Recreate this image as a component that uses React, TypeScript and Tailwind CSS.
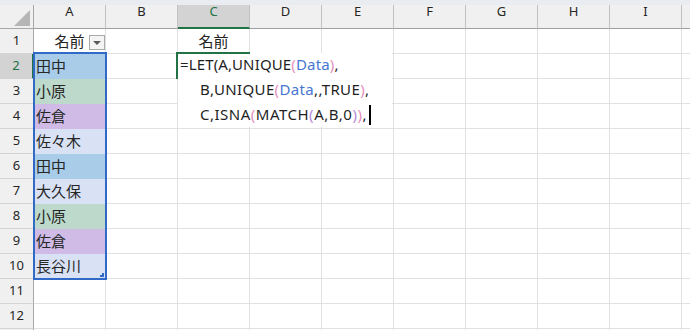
const cols = ["A", "B", "C", "D", "E", "F", "G", "H", "I", "J"];

const names: { text: string; bg: string }[] = [
  { text: "田中", bg: "bg-[#a9cce9] border-b-[#a9cce9]" },
  { text: "小原", bg: "bg-[#bcd9cb] border-b-[#bcd9cb]" },
  { text: "佐倉", bg: "bg-[#cfbbe6] border-b-[#cfbbe6]" },
  { text: "佐々木", bg: "bg-[#d9e2f4] border-b-[#d9e2f4]" },
  { text: "田中", bg: "bg-[#a9cce9] border-b-[#a9cce9]" },
  { text: "大久保", bg: "bg-[#d9e2f4] border-b-[#d9e2f4]" },
  { text: "小原", bg: "bg-[#bcd9cb] border-b-[#bcd9cb]" },
  { text: "佐倉", bg: "bg-[#cfbbe6] border-b-[#cfbbe6]" },
  { text: "長谷川", bg: "bg-[#d9e2f4] border-b-[#d9e2f4]" },
];

const P2 = ({ c }: { c: string }) => <span className="text-[#e38fbd]">{c}</span>;
const P3 = ({ c }: { c: string }) => <span className="text-[#b58bd8]">{c}</span>;
const Ref = ({ c }: { c: string }) => <span className="text-[#4676d2]">{c}</span>;

function ColumnHeader() {
  return (
    <div className="flex h-[24px] bg-[#f0f0f0]">
      <div className="w-[34px] shrink-0 border-r border-b border-[#a8a8a8] flex items-end justify-end pr-[3px] pb-[2px]">
        <svg width="16" height="16" viewBox="0 0 16 16">
          <polygon points="16,0 16,16 0,16" fill="#b6b6b6" />
        </svg>
      </div>
      {cols.map((c) => (
        <div
          key={c}
          className={
            c === "C"
              ? "w-[72px] shrink-0 flex justify-center items-start text-[13px] leading-[13px] border-r border-[#c2c2c2] border-b-2 border-b-[#217346] bg-[#d3d3d3] text-[#217346]"
              : "w-[72px] shrink-0 flex justify-center items-start text-[13px] leading-[13px] border-r border-[#c2c2c2] border-b border-b-[#9f9f9f] text-[#262626]"
          }
        >
          {c === "J" ? "" : c}
        </div>
      ))}
    </div>
  );
}

function Row({ n }: { n: number }) {
  const name = n >= 2 && n <= 10 ? names[n - 2] : null;
  return (
    <div className="flex h-[25px]">
      <div
        className={
          n === 2
            ? "w-[34px] shrink-0 flex items-center justify-center text-[13px] bg-[#d3d3d3] text-[#217346] border-b border-b-[#d4d4d4] border-r-2 border-r-[#217346]"
            : "w-[34px] shrink-0 flex items-center justify-center text-[13px] bg-[#f0f0f0] text-[#262626] border-b border-b-[#d4d4d4] border-r border-r-[#a8a8a8]"
        }
      >
        {n <= 12 ? n : ""}
      </div>
      {cols.map((c) => {
        if (c === "A") {
          if (n === 1) {
            return (
              <div key={c} className="relative w-[72px] shrink-0 border-r border-b border-[#e1e1e1] flex items-center justify-center text-[15px] text-[#222]">
                名前
                <div className="absolute right-0 top-[6px] w-[16px] h-[15px] border border-[#a9a9a9] bg-[#f4f4f4] flex items-center justify-center">
                  <div className="w-0 h-0 border-l-[4px] border-r-[4px] border-t-[4px] border-l-transparent border-r-transparent border-t-[#5a5a5a]" />
                </div>
              </div>
            );
          }
          if (name) {
            return (
              <div key={c} className={`w-[72px] shrink-0 border-r border-r-[#e1e1e1] border-b flex items-center pl-[2px] text-[15px] text-[#262626] ${name.bg}`}>
                {name.text}
              </div>
            );
          }
        }
        if (c === "C" && n === 1) {
          return (
            <div key={c} className="w-[72px] shrink-0 border-r border-b border-[#e1e1e1] flex items-center justify-center text-[15px] text-[#222]">
              名前
            </div>
          );
        }
        return <div key={c} className="w-[72px] shrink-0 border-r border-b border-[#e1e1e1]" />;
      })}
    </div>
  );
}

export default function App() {
  return (
    <div className="relative w-[690px] h-[330px] overflow-hidden bg-white font-['Noto_Sans','Noto_Sans_CJK_JP',sans-serif]">
      <div className="h-[5px] bg-[#e9ecf0]" />
      <ColumnHeader />
      {Array.from({ length: 13 }, (_, i) => (
        <Row key={i} n={i + 1} />
      ))}

      {/* selection of A2:A10 */}
      <div className="absolute left-[33px] top-[52px] w-[74px] h-[228px] border-2 border-[#3169c6]">
        <div className="absolute right-[1px] bottom-[1px] w-[4px] h-[4px] border-r-2 border-b-2 border-[#3169c6]" />
      </div>

      {/* in-cell editor on C2 */}
      <div className="absolute left-[178px] top-[53px] w-[214px] h-[74px] bg-white text-[15px] leading-[25px] text-[#1f1f1f] whitespace-nowrap">
        <div className="pl-[2px] -mt-[1px] tracking-[0.15px]">
          =LET(A,UNIQUE<P2 c="(" /><Ref c="Data" /><P2 c=")" />,
        </div>
        <div className="pl-[22px] tracking-[0.35px]">
          B,UNIQUE<P2 c="(" /><Ref c="Data" />,,TRUE<P2 c=")" />,
        </div>
        <div className="pl-[22px] flex items-center tracking-[0.5px]">
          <span>
            C,ISNA<P2 c="(" />MATCH<P3 c="(" />A,B,0<P3 c=")" /><P2 c=")" />,
          </span>
          <span className="inline-block w-[2px] h-[20px] bg-black ml-[2px]" />
        </div>
      </div>
      <div className="absolute left-[177px] top-[52px] w-[73px] h-[2px] bg-[#217346]" />
      <div className="absolute left-[176px] top-[52px] w-[2px] h-[27px] bg-[#217346]" />
    </div>
  );
}
